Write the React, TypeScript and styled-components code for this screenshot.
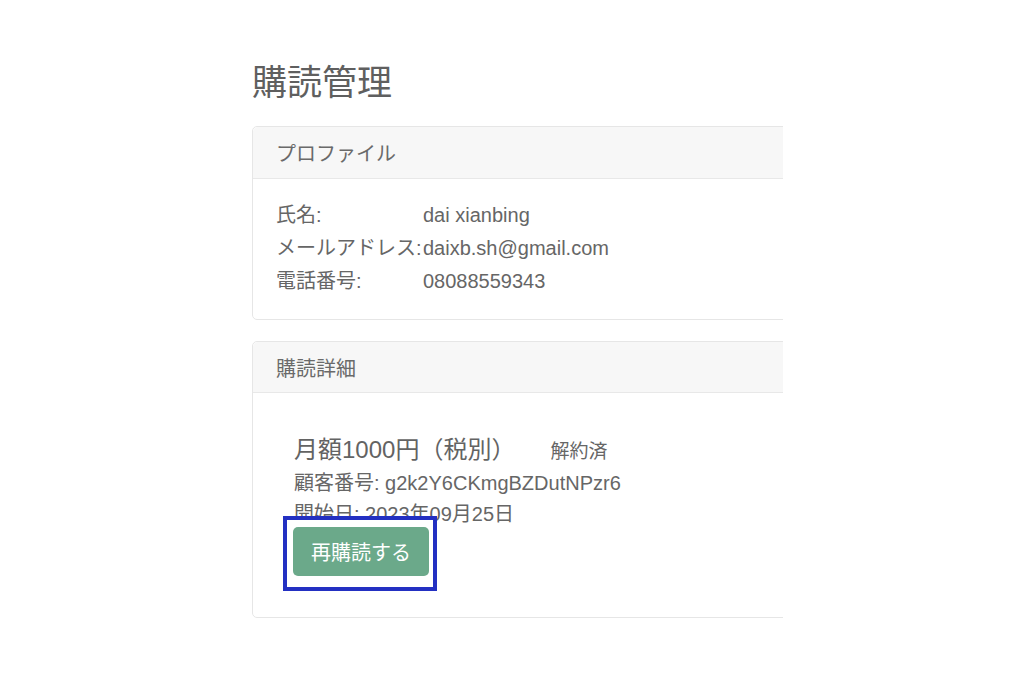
import React from "react";
import styled, { createGlobalStyle } from "styled-components";

const GlobalStyle = createGlobalStyle`
  html, body {
    margin: 0;
    padding: 0;
    background: #ffffff;
  }
  body {
    font-family: "Liberation Sans", "Noto Sans CJK JP", sans-serif;
    color: #666666;
  }
`;

const Page = styled.div`
  width: 1012px;
  height: 688px;
  box-sizing: border-box;
  padding: 62px 0 0 252px;
  overflow: hidden;
`;

const Title = styled.h1`
  margin: 0 0 22px 0;
  font-size: 35px;
  line-height: 42px;
  font-weight: 400;
  color: #5f5f5f;
`;

const Viewport = styled.div`
  width: 531px;
  overflow: hidden;
  display: flex;
  flex-direction: column;
  gap: 21px;
`;

const Card = styled.section`
  width: 580px;
  box-sizing: border-box;
  border: 1px solid #e6e6e6;
  border-radius: 5px;
  background: #fff;
`;

const CardHeader = styled.div<{ $h: number }>`
  height: ${(p) => p.$h}px;
  box-sizing: border-box;
  display: flex;
  align-items: center;
  padding: 0 23px;
  background: #f7f7f7;
  border-bottom: 1px solid #e8e8e8;
  border-radius: 5px 5px 0 0;
  font-size: 20px;
  color: #6a6a6a;
`;

const CardBody = styled.div<{ $pad: string }>`
  padding: ${(p) => p.$pad};
`;

const InfoRow = styled.div`
  display: flex;
  font-size: 20px;
  line-height: 33px;
  color: #666;
`;

const Label = styled.span`
  flex: 0 0 147px;
  white-space: nowrap;
`;

const Value = styled.span`
  white-space: nowrap;
`;

const Plan = styled.div`
  padding: 20px 18px 0 18px;
`;

const PlanTitle = styled.div`
  display: flex;
  align-items: baseline;
  font-size: 24px;
  line-height: 33px;
  color: #636363;
`;

const Status = styled.span`
  margin-left: 35px;
  font-size: 19px;
  color: #666;
`;

const PlanLine = styled.div`
  font-size: 20px;
  line-height: 31px;
  color: #666;
  white-space: nowrap;
`;

const Highlight = styled.div`
  position: relative;
  z-index: 1;
  margin: -14px 0 0 -11px;
  width: 154px;
  height: 75px;
  box-sizing: border-box;
  border: 4px solid #2330c2;
  background: #ffffff;
  padding: 7px 4px 0 6px;
`;

const Button = styled.button`
  width: 136px;
  height: 49px;
  border: none;
  border-radius: 5px;
  background: #6ba98a;
  color: #ffffff;
  font-family: "Liberation Sans", "Noto Sans CJK JP", sans-serif;
  font-size: 20px;
  padding: 0;
  cursor: pointer;
`;

const profile = [
  { label: "氏名:", value: "dai xianbing" },
  { label: "メールアドレス:", value: "daixb.sh@gmail.com" },
  { label: "電話番号:", value: "08088559343" },
];

export default function App() {
  return (
    <>
      <GlobalStyle />
      <Page>
        <Title>購読管理</Title>
        <Viewport>
          <Card>
            <CardHeader $h={52}>プロファイル</CardHeader>
            <CardBody $pad="20px 23px 21px 23px">
              {profile.map((r) => (
                <InfoRow key={r.label}>
                  <Label>{r.label}</Label>
                  <Value>{r.value}</Value>
                </InfoRow>
              ))}
            </CardBody>
          </Card>
          <Card>
            <CardHeader $h={51}>購読詳細</CardHeader>
            <CardBody $pad="20px 23px 26px 23px">
              <Plan>
                <PlanTitle>
                  月額1000円（税別）<Status>解約済</Status>
                </PlanTitle>
                <PlanLine>顧客番号: g2k2Y6CKmgBZDutNPzr6</PlanLine>
                <PlanLine>開始日: 2023年09月25日</PlanLine>
                <Highlight>
                  <Button>再購読する</Button>
                </Highlight>
              </Plan>
            </CardBody>
          </Card>
        </Viewport>
      </Page>
    </>
  );
}
